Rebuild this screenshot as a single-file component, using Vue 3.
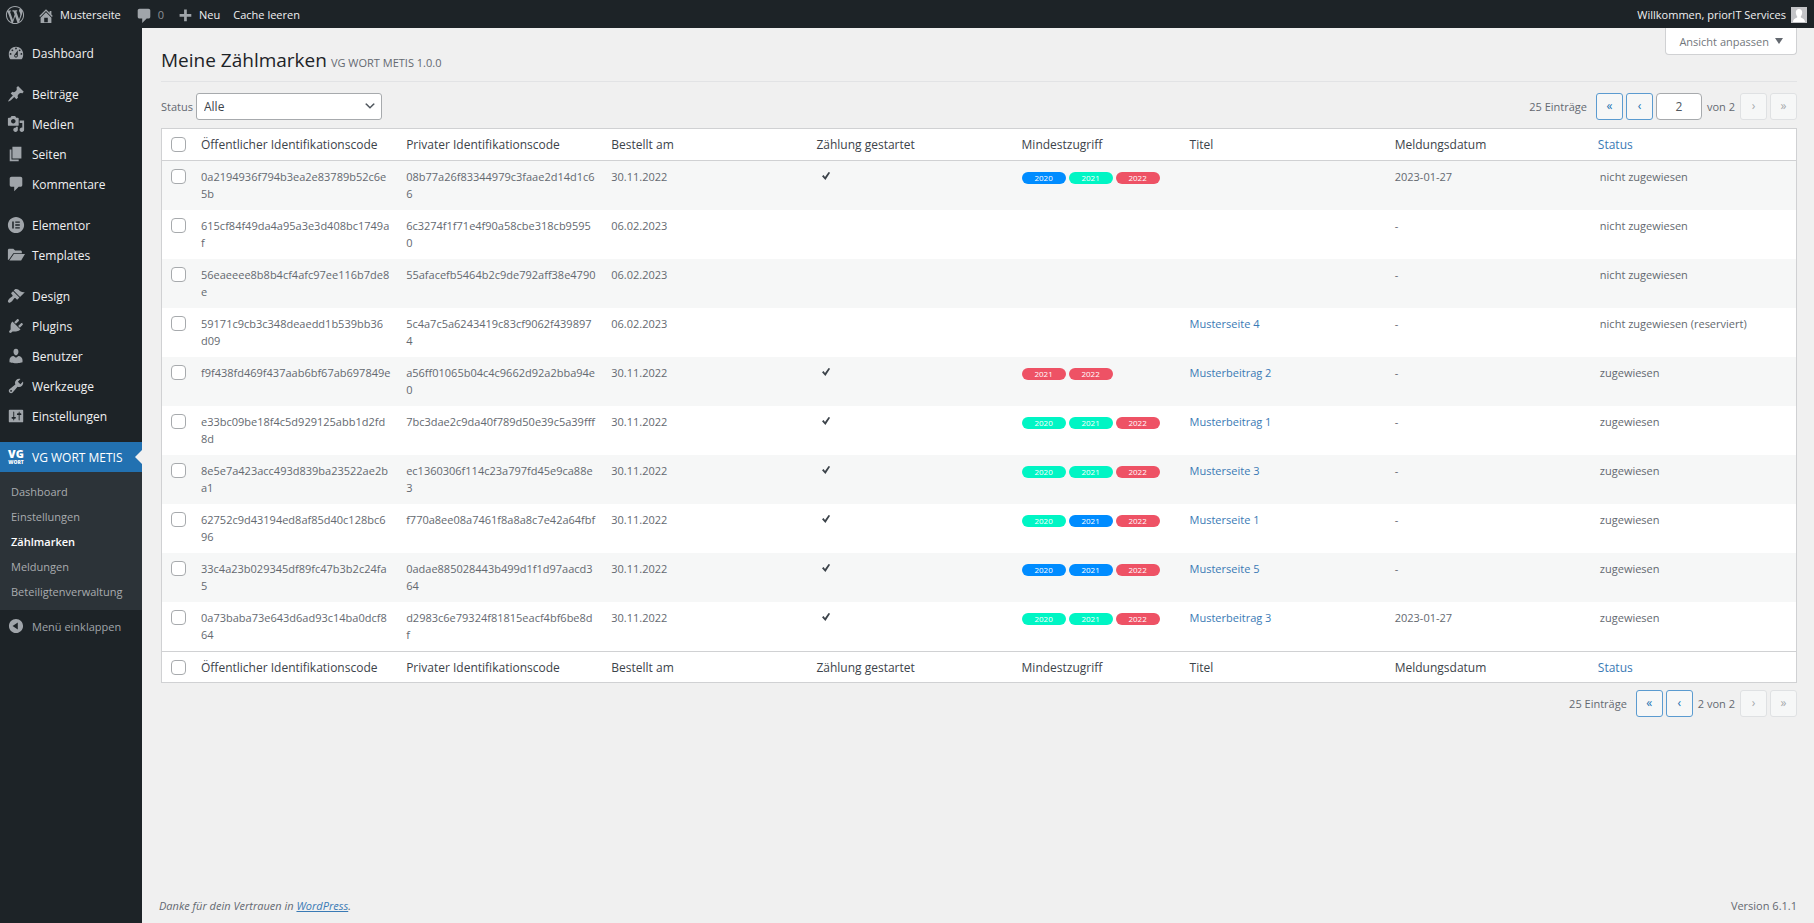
<script setup>
import { ref } from 'vue'

const icons = {
  wp: 'M20 10c0-5.51-4.49-10-10-10C4.48 0 0 4.49 0 10c0 5.52 4.48 10 10 10 5.51 0 10-4.48 10-10zM7.78 15.37L4.37 6.22c.55-.02 1.17-.08 1.17-.08.5-.06.44-1.13-.06-1.11 0 0-1.45.11-2.37.11-.18 0-.37 0-.58-.01C4.12 2.69 6.87 1.11 10 1.11c2.33 0 4.45.87 6.05 2.34-.68-.11-1.65.39-1.65 1.58 0 .74.45 1.36.9 2.1.35.61.55 1.36.55 2.46 0 1.49-1.4 5-1.4 5l-3.03-8.37c.54-.02.82-.17.82-.17.5-.05.44-1.25-.06-1.22 0 0-1.44.12-2.38.12-.87 0-2.33-.12-2.33-.12-.5-.03-.56 1.2-.06 1.22l.92.08 1.26 3.41zM17.41 10c.24-.64.74-1.87.43-4.25.7 1.29 1.05 2.71 1.05 4.25 0 3.29-1.73 6.24-4.4 7.78.97-2.59 1.94-5.2 2.92-7.78zM6.1 18.09C3.12 16.65 1.11 13.53 1.11 10c0-1.3.23-2.48.72-3.59C3.25 10.3 4.67 14.2 6.1 18.09zm4.03-6.63l2.58 6.98c-.86.29-1.76.45-2.71.45-.79 0-1.57-.11-2.29-.33.81-2.38 1.62-4.74 2.42-7.1z',
  home: 'M16 8.5l1.53 1.53-1.06 1.06L10 4.6l-6.47 6.49-1.06-1.06L10 2.5l4 4v-2h2v4zm-6-2.46l6 5.99V18H4v-5.97zM12 17v-5H8v5h4z',
  comment: 'M5 2h10c1.1 0 2 .9 2 2v7c0 1.1-.9 2-2 2h-2l-5 5v-5H5c-1.1 0-2-.9-2-2V4c0-1.1.9-2 2-2z',
  plus: 'M17 7v3h-5v5H9v-5H4V7h5V2h3v5h5z',
  dashboard: 'M3.76 17h12.48c1.34-1.63 1.76-3.67 1.76-6 0-4.42-3.58-8-8-8s-8 3.58-8 8c0 2.33.42 4.37 1.76 6zM10 4c.55 0 1 .45 1 1s-.45 1-1 1-1-.45-1-1 .45-1 1-1zM6 6c.55 0 1 .45 1 1s-.45 1-1 1-1-.45-1-1 .45-1 1-1zm8 0c.55 0 1 .45 1 1s-.45 1-1 1-1-.45-1-1 .45-1 1-1zm-5.37 5.55L12 7v6c0 1.1-.9 2-2 2s-2-.9-2-2c0-.57.24-1.08.63-1.45zM4 10c.55 0 1 .45 1 1s-.45 1-1 1-1-.45-1-1 .45-1 1-1zm12 0c.55 0 1 .45 1 1s-.45 1-1 1-1-.45-1-1 .45-1 1-1zm-5 3c0-.55-.45-1-1-1s-1 .45-1 1 .45 1 1 1 1-.45 1-1z',
  pin: 'M10.44 3.02l1.82-1.82 6.36 6.35-1.83 1.82c-1.05-.68-2.48-.57-3.41.36l-.75.75c-.92.93-1.04 2.35-.35 3.41l-1.83 1.82-2.41-2.41-2.8 2.79c-.42.42-3.38 2.71-3.8 2.29s1.86-3.39 2.28-3.81l2.79-2.79L4.1 9.36l1.83-1.82c1.05.69 2.48.57 3.4-.36l.75-.75c.93-.92 1.05-2.35.36-3.41z',
  media: 'M13 11V4c0-.55-.45-1-1-1h-1.67L9 1H5L3.67 3H2c-.55 0-1 .45-1 1v7c0 .55.45 1 1 1h10c.55 0 1-.45 1-1zM7 4.5c1.38 0 2.5 1.12 2.5 2.5S8.38 9.5 7 9.5 4.5 8.38 4.5 7 5.62 4.5 7 4.5zM14 6h5v10.5c0 1.38-1.12 2.5-2.5 2.5S14 17.88 14 16.5s1.12-2.5 2.5-2.5c.17 0 .34.02.5.05V9h-3V6zm-4 8.05V13h2v3.5c0 1.38-1.12 2.5-2.5 2.5S7 17.88 7 16.5 8.12 14 9.5 14c.17 0 .34.02.5.05z',
  page: 'M6 15V2h10v13H6zm-1 1h8v2H3V5h2v11z',
  elementor: 'M10 1C5 1 1 5 1 10s4 9 9 9 9-4 9-9-4-9-9-9zM7.500 14H5.800V6h1.700v8zm6.700 0H9.200v-1.600h5V14zm0-3.200H9.200V9.200h5v1.600zm0-3.200H9.200V6h5v1.600z',
  folder: 'M1 15.500V4.500C1 3.700 1.700 3 2.500 3H7l2 2h6c.8 0 1.500.7 1.500 1.500V8H7L2.200 15zM7.600 9H20l-4.300 7H2.600z',
  brush: 'M14.48 11.06L7.41 3.99l1.5-1.5c.5-.56 2.3-.47 3.51.32 1.21.8 1.43 1.28 2.91 2.1 1.18.64 2.45 1.26 4.45.85zm-.71.71L6.7 4.7 4.93 6.47c-.39.39-.39 1.02 0 1.41l1.06 1.06c.39.39.39 1.03 0 1.42-.6.6-1.43 1.11-2.21 1.69-.35.26-.7.53-1.01.84C1.43 14.23.4 16.08 1.4 17.07c.99 1 2.84-.03 4.18-1.36.31-.31.58-.66.85-1.02.57-.78 1.08-1.61 1.69-2.21.39-.39 1.02-.39 1.41 0l1.06 1.06c.39.39 1.02.39 1.41 0z',
  plug: 'M13.11 4.36L9.87 7.6 8 5.73l3.24-3.24c.35-.34 1.05-.2 1.56.32.52.51.66 1.21.31 1.55zm-8 1.77l.91-1.12 9.01 9.01-1.19.84c-.71.71-2.63 1.16-3.82 1.16H6.14L4.9 17.26c-.59.59-1.54.59-2.12 0-.59-.58-.59-1.53 0-2.12l1.24-1.24v-3.88c0-1.13.4-3.19 1.09-3.89zm7.26 3.97l3.24-3.24c.34-.35 1.04-.21 1.55.31.52.51.66 1.21.31 1.55l-3.24 3.25z',
  user: 'M10 9.25c-2.27 0-2.73-3.44-2.73-3.44C7 4.02 7.82 2 9.97 2c2.16 0 2.98 2.02 2.71 3.81 0 0-.41 3.44-2.68 3.44zm0 2.57L12.72 10c2.39 0 4.52 2.33 4.52 4.53v2.49s-3.65 1.13-7.24 1.13c-3.65 0-7.24-1.13-7.24-1.13v-2.49c0-2.25 1.94-4.48 4.47-4.48z',
  wrench: 'M16.68 9.77c-1.34 1.34-3.3 1.67-4.95.99l-5.41 6.52c-.99.99-2.59.99-3.58 0s-.99-2.59 0-3.57l6.52-5.42c-.68-1.65-.35-3.61.99-4.95 1.28-1.28 3.12-1.62 4.72-1.06l-2.89 2.89 2.82 2.82 2.86-2.87c.53 1.58.18 3.39-1.08 4.65zM3.81 16.21c.4.39 1.04.39 1.43 0 .4-.4.4-1.04 0-1.43-.39-.4-1.03-.4-1.43 0-.39.39-.39 1.03 0 1.43z',
  sliders: 'M18 16V4c0-.55-.45-1-1-1H3c-.55 0-1 .45-1 1v12c0 .55.45 1 1 1h14c.55 0 1-.45 1-1zM8 11h1c.55 0 1 .45 1 1s-.45 1-1 1H8v1.5c0 .28-.22.5-.5.5s-.5-.22-.5-.5V13H6c-.55 0-1-.45-1-1s.45-1 1-1h1V5.5c0-.28.22-.5.5-.5s.5.22.5.5V11zm5-2h-1c-.55 0-1-.45-1-1s.45-1 1-1h1V5.5c0-.28.22-.5.5-.5s.5.22.5.5V7h1c.55 0 1 .45 1 1s-.45 1-1 1h-1v5.5c0 .28-.22.5-.5.5s-.5-.22-.5-.5V9z',
  collapse: 'M10 2.16c4.33 0 7.84 3.51 7.84 7.84s-3.51 7.84-7.84 7.84S2.16 14.33 2.16 10 5.67 2.16 10 2.16zm2 11.72V6.12L6.18 9.97z',
  check: 'M2 10.500l3.200-2.300 2.800 3.700L15.200 1.800 18.200 3.300 8.800 18.200z',
  chevron: 'M5 6l5 5 5-5 2 1-7 7-7-7 2-1z'
}

const menu = [
  [{ label: 'Dashboard', icon: 'dashboard' }],
  [
    { label: 'Beiträge', icon: 'pin' },
    { label: 'Medien', icon: 'media' },
    { label: 'Seiten', icon: 'page' },
    { label: 'Kommentare', icon: 'comment' }
  ],
  [
    { label: 'Elementor', icon: 'elementor' },
    { label: 'Templates', icon: 'folder' }
  ],
  [
    { label: 'Design', icon: 'brush' },
    { label: 'Plugins', icon: 'plug' },
    { label: 'Benutzer', icon: 'user' },
    { label: 'Werkzeuge', icon: 'wrench' },
    { label: 'Einstellungen', icon: 'sliders' }
  ]
]

const submenu = ['Dashboard', 'Einstellungen', 'Zählmarken', 'Meldungen', 'Beteiligtenverwaltung']

const columns = [
  'Öffentlicher Identifikationscode',
  'Privater Identifikationscode',
  'Bestellt am',
  'Zählung gestartet',
  'Mindestzugriff',
  'Titel',
  'Meldungsdatum'
]

const b = 'blue'
const g = 'green'
const r = 'red'

const rows = [
  { pub: '0a2194936f794b3ea2e83789b52c6e\n5b', priv: '08b77a26f83344979c3faae2d14d1c6\n6', date: '30.11.2022', started: true, years: [[2020, b], [2021, g], [2022, r]], title: '', report: '2023-01-27', status: 'nicht zugewiesen' },
  { pub: '615cf84f49da4a95a3e3d408bc1749a\nf', priv: '6c3274f1f71e4f90a58cbe318cb9595\n0', date: '06.02.2023', started: false, years: [], title: '', report: '-', status: 'nicht zugewiesen' },
  { pub: '56eaeeee8b8b4cf4afc97ee116b7de8\ne', priv: '55afacefb5464b2c9de792aff38e4790', date: '06.02.2023', started: false, years: [], title: '', report: '-', status: 'nicht zugewiesen' },
  { pub: '59171c9cb3c348deaedd1b539bb36\nd09', priv: '5c4a7c5a6243419c83cf9062f439897\n4', date: '06.02.2023', started: false, years: [], title: 'Musterseite 4', report: '-', status: 'nicht zugewiesen (reserviert)' },
  { pub: 'f9f438fd469f437aab6bf67ab697849e', priv: 'a56ff01065b04c4c9662d92a2bba94e\n0', date: '30.11.2022', started: true, years: [[2021, r], [2022, r]], title: 'Musterbeitrag 2', report: '-', status: 'zugewiesen' },
  { pub: 'e33bc09be18f4c5d929125abb1d2fd\n8d', priv: '7bc3dae2c9da40f789d50e39c5a39fff', date: '30.11.2022', started: true, years: [[2020, g], [2021, g], [2022, r]], title: 'Musterbeitrag 1', report: '-', status: 'zugewiesen' },
  { pub: '8e5e7a423acc493d839ba23522ae2b\na1', priv: 'ec1360306f114c23a797fd45e9ca88e\n3', date: '30.11.2022', started: true, years: [[2020, g], [2021, g], [2022, r]], title: 'Musterseite 3', report: '-', status: 'zugewiesen' },
  { pub: '62752c9d43194ed8af85d40c128bc6\n96', priv: 'f770a8ee08a7461f8a8a8c7e42a64fbf', date: '30.11.2022', started: true, years: [[2020, g], [2021, b], [2022, r]], title: 'Musterseite 1', report: '-', status: 'zugewiesen' },
  { pub: '33c4a23b029345df89fc47b3b2c24fa\n5', priv: '0adae885028443b499d1f1d97aacd3\n64', date: '30.11.2022', started: true, years: [[2020, b], [2021, b], [2022, r]], title: 'Musterseite 5', report: '-', status: 'zugewiesen' },
  { pub: '0a73baba73e643d6ad93c14ba0dcf8\n64', priv: 'd2983c6e79324f81815eacf4bf6be8d\nf', date: '30.11.2022', started: true, years: [[2020, g], [2021, g], [2022, r]], title: 'Musterbeitrag 3', report: '2023-01-27', status: 'zugewiesen' }
]

const page = ref('2')
</script>

<template>
  <div class="admin">
    <header class="bar">
      <a href="#" class="bar-item" aria-label="WordPress">
        <svg class="ico" viewBox="-1 -1 22 22"><path :d="icons.wp" /></svg>
      </a>
      <a href="#" class="bar-item home">
        <svg class="ico" viewBox="0 -1 20 20"><path :d="icons.home" /></svg>Musterseite
      </a>
      <a href="#" class="bar-item count">
        <svg class="ico" viewBox="0 -1 20 20"><path :d="icons.comment" /></svg>0
      </a>
      <a href="#" class="bar-item new">
        <svg class="ico" viewBox="0 -2 20 20"><path :d="icons.plus" /></svg>Neu
      </a>
      <a href="#" class="bar-item cache">Cache leeren</a>
      <a href="#" class="bar-item account">
        Willkommen, priorIT Services
        <svg class="avatar" viewBox="0 0 16 16">
          <rect width="16" height="16" fill="#c3c4c7" />
          <path d="M8 2c2 0 3.200 1.500 3.200 3.500S10 9.500 9.600 10c0 1 4.400 1.200 4.400 5H2c0-3.800 4.400-4 4.400-5C6 9.500 4.800 7.500 4.800 5.500S6 2 8 2z" fill="#fff" />
        </svg>
      </a>
    </header>

    <div class="body">
      <nav class="side" aria-label="Hauptmenü">
        <ul v-for="(group, i) in menu" :key="i" class="group">
          <li v-for="item in group" :key="item.label">
            <a href="#" class="item">
              <svg class="ico" viewBox="0 0 20 20"><path fill-rule="evenodd" :d="icons[item.icon]" /></svg>
              {{ item.label }}
            </a>
          </li>
        </ul>
        <ul class="group">
          <li>
            <a href="#" class="item current">
              <span class="logo"><b>VG</b><small>WORT</small></span>
              VG WORT METIS
            </a>
            <ul class="sub">
              <li v-for="s in submenu" :key="s">
                <a href="#" :class="{ on: s === 'Zählmarken' }">{{ s }}</a>
              </li>
            </ul>
          </li>
        </ul>
        <button type="button" class="collapse">
          <svg class="ico" viewBox="0 0 20 20"><path fill-rule="evenodd" :d="icons.collapse" /></svg>
          Menü einklappen
        </button>
      </nav>

      <main class="main">
        <button type="button" class="screen">
          Ansicht anpassen
          <svg viewBox="0 0 8 8"><path d="M0 1h8L4 7z" /></svg>
        </button>
        <div class="heading">
          <h1>Meine Zählmarken</h1>
          <span>VG WORT METIS 1.0.0</span>
        </div>

        <div class="tools">
          <label for="status">Status</label>
          <div class="pick">
            <select id="status"><option>Alle</option></select>
            <svg viewBox="0 0 20 20"><path :d="icons.chevron" /></svg>
          </div>
          <div class="pager">
            <span class="total">25 Einträge</span>
            <button type="button" aria-label="Erste Seite">«</button>
            <button type="button" aria-label="Vorherige Seite">‹</button>
            <input v-model="page" type="text" aria-label="Aktuelle Seite" />
            <span class="of">von 2</span>
            <button type="button" disabled aria-label="Nächste Seite">›</button>
            <button type="button" disabled aria-label="Letzte Seite">»</button>
          </div>
        </div>

        <table>
          <colgroup>
            <col class="c-check" />
            <col v-for="c in columns" :key="c" :class="{ 'c-years': c === 'Mindestzugriff' }" />
            <col />
          </colgroup>
          <thead>
            <tr>
              <td class="check"><input type="checkbox" aria-label="Alle auswählen" /></td>
              <th v-for="c in columns" :key="c" scope="col">{{ c }}</th>
              <th class="sortable" scope="col"><a href="#">Status</a></th>
            </tr>
          </thead>
          <tbody>
            <tr v-for="row in rows" :key="row.pub">
              <td class="check"><input type="checkbox" aria-label="Zählmarke auswählen" /></td>
              <td class="code">{{ row.pub }}</td>
              <td class="code">{{ row.priv }}</td>
              <td>{{ row.date }}</td>
              <td>
                <svg v-if="row.started" class="yes" viewBox="0 0 20 20"><path :d="icons.check" /></svg>
              </td>
              <td>
                <div class="years">
                  <span v-for="[y, tone] in row.years" :key="y" :class="tone">{{ y }}</span>
                </div>
              </td>
              <td><a v-if="row.title" href="#">{{ row.title }}</a></td>
              <td>{{ row.report }}</td>
              <td>{{ row.status }}</td>
            </tr>
          </tbody>
          <tfoot>
            <tr>
              <td class="check"><input type="checkbox" aria-label="Alle auswählen" /></td>
              <th v-for="c in columns" :key="c" scope="col">{{ c }}</th>
              <th class="sortable" scope="col"><a href="#">Status</a></th>
            </tr>
          </tfoot>
        </table>

        <div class="pager bottom">
          <span class="total">25 Einträge</span>
          <button type="button" aria-label="Erste Seite">«</button>
          <button type="button" aria-label="Vorherige Seite">‹</button>
          <span class="of">2 von 2</span>
          <button type="button" disabled aria-label="Nächste Seite">›</button>
          <button type="button" disabled aria-label="Letzte Seite">»</button>
        </div>

        <footer class="foot">
          <i>Danke für dein Vertrauen in <a href="#">WordPress</a>.</i>
          <span>Version 6.1.1</span>
        </footer>
      </main>
    </div>
  </div>
</template>

<style>
body {
  background: #f0f0f0;
}
</style>

<style scoped>
* {
  box-sizing: border-box;
}
.admin {
  display: flex;
  flex-direction: column;
  min-height: 100vh;
  font-family: 'Open Sans', 'Noto Sans', sans-serif;
  font-size: 11px;
  line-height: 17px;
  color: #646970;
}
.admin a {
  text-decoration: none;
}
button,
input,
select {
  font-family: inherit;
  margin: 0;
}
ul {
  list-style: none;
  margin: 0;
  padding: 0;
}
.ico {
  width: 18px;
  height: 18px;
  flex: none;
  fill: #a0a5aa;
}

.bar {
  display: flex;
  height: 28px;
  padding: 0 7px 0 5px;
  background: #1d2327;
}
.bar-item {
  display: flex;
  align-items: center;
  gap: 5px;
  padding-top: 1px;
  color: #f0f0f1;
}
.bar-item:first-child .ico {
  width: 20px;
  height: 20px;
}
.home {
  margin-left: 12px;
}
.count {
  margin-left: 14px;
  color: #8c9196;
}
.new {
  margin-left: 12px;
}
.cache {
  margin-left: 13px;
}
.account {
  margin-left: auto;
}
.avatar {
  width: 16px;
  height: 16px;
}

.body {
  display: flex;
  flex: 1;
}
.side {
  width: 142px;
  flex: none;
  padding-top: 10px;
  background: #1d2327;
}
.group + .group {
  margin-top: 11px;
}
.item {
  display: flex;
  align-items: center;
  gap: 7px;
  height: 30px;
  padding-left: 7px;
  font-size: 12px;
  color: #f0f0f1;
  white-space: nowrap;
}
.current {
  position: relative;
  background: #2271b1;
  color: #fff;
}
.current::after {
  content: '';
  position: absolute;
  right: 0;
  top: 8px;
  border: 7px solid transparent;
  border-left-width: 0;
  border-right-color: #f0f0f0;
}
.logo {
  display: flex;
  flex-direction: column;
  align-items: center;
  width: 18px;
}
.logo b {
  font-size: 11px;
  line-height: 10px;
  font-weight: 800;
}
.logo small {
  font-size: 5px;
  line-height: 6px;
  font-weight: 800;
}
.sub {
  padding: 7px 0 6px;
  background: #2c3338;
}
.sub a {
  display: block;
  padding-left: 11px;
  line-height: 25px;
  color: #a9acaf;
}
.sub .on {
  font-weight: 600;
  color: #fff;
}
.collapse {
  display: flex;
  align-items: center;
  gap: 7px;
  height: 32px;
  padding: 0 0 0 7px;
  border: 0;
  background: none;
  font-size: 11px;
  color: #a0a5aa;
}

.main {
  display: flex;
  flex-direction: column;
  flex: 1;
  min-width: 0;
  padding: 0 17px 0 19px;
}
.screen {
  align-self: flex-end;
  display: flex;
  align-items: center;
  gap: 6px;
  height: 27px;
  padding: 0 13px;
  border: 1px solid #d0d1d3;
  border-top: 0;
  border-radius: 0 0 4px 4px;
  background: #fff;
  font-size: 11px;
  color: #72777c;
}
.screen svg {
  width: 8px;
  height: 8px;
  fill: #646970;
}
.heading {
  display: flex;
  align-items: baseline;
  gap: 4px;
  margin-top: -10px;
  height: 37px;
  border-bottom: 1px solid #e2e3e5;
}
.heading h1 {
  margin: 0;
  font-size: 19px;
  line-height: 30px;
  font-weight: 400;
  color: #1d2327;
}
.tools {
  display: flex;
  align-items: center;
  gap: 3px;
  margin: 11px 0 8px;
}
.pick {
  position: relative;
  width: 186px;
}
.pick select {
  display: block;
  appearance: none;
  width: 100%;
  height: 27px;
  padding: 0 22px 0 7px;
  border: 1px solid #a7aaad;
  border-radius: 3px;
  background: #fff;
  font-size: 12px;
  color: #3c434a;
}
.pick svg {
  position: absolute;
  right: 5px;
  top: 6px;
  width: 14px;
  height: 14px;
  fill: #50575e;
  pointer-events: none;
}
.pager {
  display: flex;
  align-items: center;
  gap: 3px;
  margin-left: auto;
}
.pager .total {
  margin-right: 6px;
}
.pager .of {
  margin: 0 2px;
}
.pager button {
  width: 27px;
  height: 27px;
  padding: 0 0 2px;
  border: 1px solid #5b9bd0;
  border-radius: 3px;
  background: #f6f7f7;
  font-size: 12px;
  color: #2271b1;
}
.pager button:disabled {
  border-color: #dfe1e3;
  color: #a7aaad;
}
.pager input {
  width: 46px;
  height: 27px;
  padding: 0;
  border: 1px solid #a7aaad;
  border-radius: 4px;
  background: #fff;
  font-size: 12px;
  text-align: center;
  color: #50575e;
}
.bottom {
  margin-top: 7px;
}

table {
  width: 100%;
  table-layout: fixed;
  border-collapse: separate;
  border-spacing: 0;
  border: 1px solid #d0d1d3;
  background: #fff;
}
.c-check {
  width: 30px;
}
.c-years {
  width: 168px;
}
th,
td {
  padding: 7px 9px;
  text-align: left;
  vertical-align: top;
  font-weight: 400;
  white-space: nowrap;
}
th {
  font-size: 12px;
  color: #3c434a;
}
thead th,
thead td {
  border-bottom: 1px solid #d0d1d3;
}
tfoot th,
tfoot td {
  padding-bottom: 6px;
  border-top: 1px solid #d0d1d3;
}
th.sortable {
  padding-left: 7px;
}
tbody td {
  height: 49px;
}
tbody tr:nth-child(odd) {
  background: #f6f7f7;
}
.code {
  white-space: pre;
}
table a,
.foot a {
  color: #3a7ab5;
}
td.check {
  padding-right: 0;
}
.check input {
  appearance: none;
  display: block;
  width: 15px;
  height: 15px;
  margin: 1px 0;
  border: 1px solid #a7aaad;
  border-radius: 4px;
  background: #fff;
}
.yes {
  display: block;
  width: 10px;
  height: 10px;
  margin: 3px 0 0 5px;
  fill: #3c434a;
}
.years {
  display: flex;
  gap: 3px;
  padding-top: 4px;
}
.years span {
  width: 44px;
  height: 12px;
  border-radius: 6px;
  font-size: 8px;
  line-height: 12px;
  text-align: center;
  color: #fff;
}
.blue {
  background: #008cff;
}
.green {
  background: #00f5c4;
}
.red {
  background: #ee5265;
}

.foot {
  display: flex;
  justify-content: space-between;
  margin: auto 0 9px -2px;
}
.admin .foot a {
  text-decoration: underline;
}
</style>
